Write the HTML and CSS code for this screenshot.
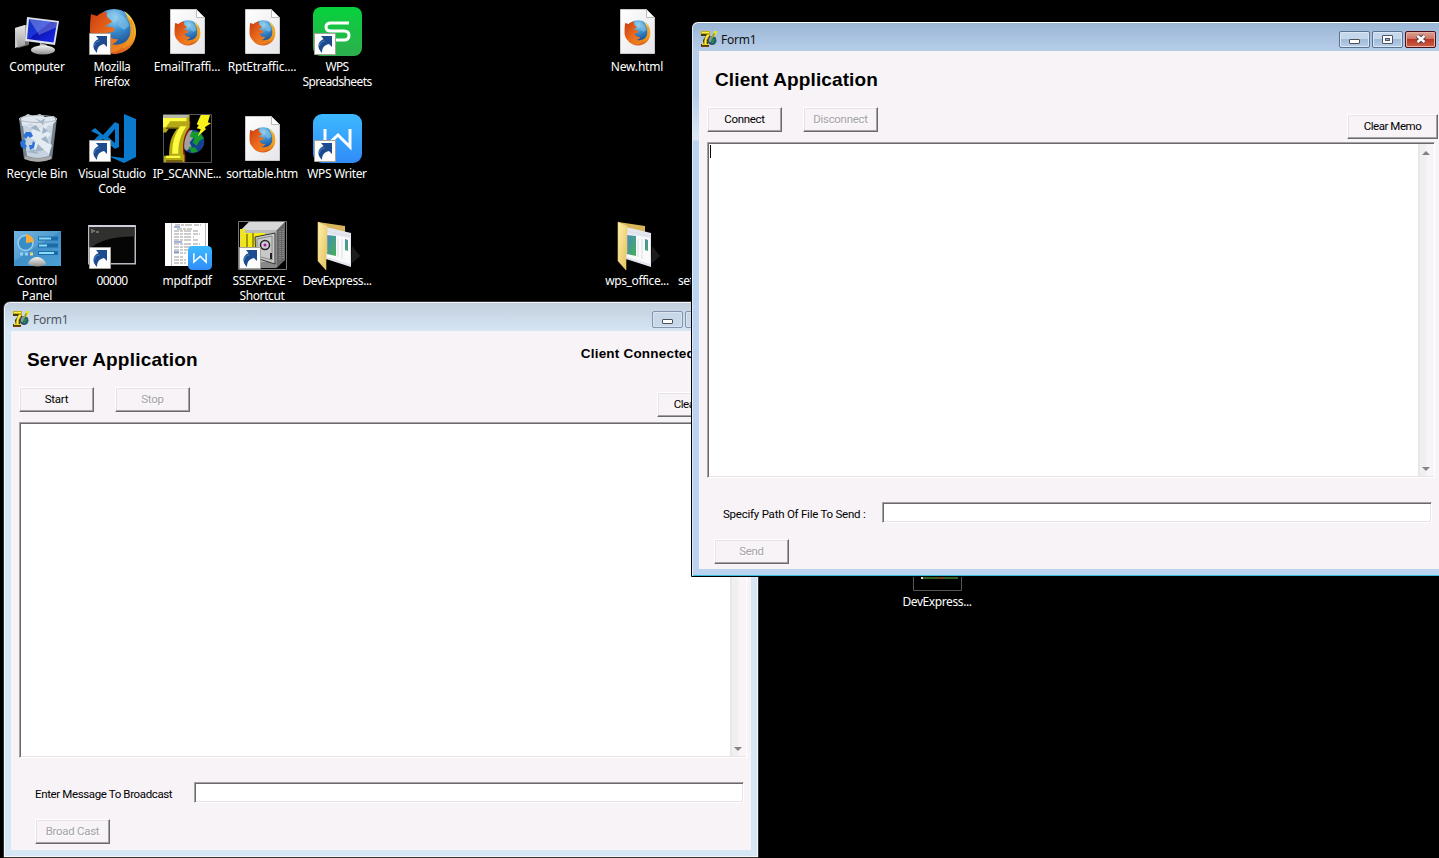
FILE: index.html
```html
<!DOCTYPE html>
<html lang="en">
<head>
<meta charset="utf-8">
<title>Form1</title>
<link rel="stylesheet" href="styles.css">
</head>
<body>
<svg class="defs" width="0" height="0" aria-hidden="true">
  <defs>
    <radialGradient id="globe" cx=".5" cy=".2" r=".8"><stop offset="0" stop-color="#a5dcf4"/><stop offset=".4" stop-color="#3a8fd0"/><stop offset="1" stop-color="#123a80"/></radialGradient>
    <linearGradient id="fox" x1="0" y1="0" x2="1" y2="1"><stop offset="0" stop-color="#c93c10"/><stop offset=".5" stop-color="#ea681c"/><stop offset="1" stop-color="#f08a20"/></linearGradient>
    <linearGradient id="tail" x1="0" y1="0" x2="0" y2="1"><stop offset="0" stop-color="#f6dc56"/><stop offset=".6" stop-color="#f5a81d"/><stop offset="1" stop-color="#d9581a"/></linearGradient>
    <linearGradient id="screen" x1="0" y1="0" x2="1" y2="1"><stop offset="0" stop-color="#1030b8"/><stop offset=".45" stop-color="#1c35dc"/><stop offset=".46" stop-color="#0a14b0"/><stop offset="1" stop-color="#1a2cf0"/></linearGradient>
    <linearGradient id="metal" x1="0" y1="0" x2="0" y2="1"><stop offset="0" stop-color="#f4f4f4"/><stop offset="1" stop-color="#8d8d8d"/></linearGradient>
    <linearGradient id="green" x1="0" y1="0" x2="0" y2="1"><stop offset="0" stop-color="#06d23c"/><stop offset="1" stop-color="#2eae4e"/></linearGradient>
    <linearGradient id="azure" x1="0" y1="0" x2="0" y2="1"><stop offset="0" stop-color="#3cb9ff"/><stop offset="1" stop-color="#318cf8"/></linearGradient>
    <linearGradient id="folder" x1="0" y1="0" x2="1" y2="1"><stop offset="0" stop-color="#fff2ac"/><stop offset="1" stop-color="#e5bf5c"/></linearGradient>
    <linearGradient id="page" x1="0" y1="0" x2="1" y2="1"><stop offset="0" stop-color="#fff"/><stop offset="1" stop-color="#e6e6ea"/></linearGradient>
    <linearGradient id="panel" x1="0" y1="0" x2="1" y2="1"><stop offset="0" stop-color="#62aede"/><stop offset=".5" stop-color="#3f90c8"/><stop offset="1" stop-color="#4da0d6"/></linearGradient>
    <linearGradient id="sheet" x1="0" y1="0" x2="1" y2="1"><stop offset="0" stop-color="#478ac2"/><stop offset="1" stop-color="#45b052"/></linearGradient>

    <symbol id="i-link" viewBox="0 0 22 22">
      <path d="M.5.5h21v21H.5z" fill="#fdfdfd" stroke="#a8a29c"/>
      <path d="M8 20C3 15 3 9 9.500 6L7 3h11v11l-3-3c-5 1-7 4-7 9z" fill="#1c4c8f"/>
      <path d="M5.500 13c0-3 2-5 5-5" fill="none" stroke="#4a86c4"/>
    </symbol>
    <symbol id="i-firefox" viewBox="0 0 48 48">
      <circle cx="25" cy="23" r="21" fill="url(#globe)"/>
      <path d="M18 8c5-5 11-2 9 0s1 4-3 5-5 4-7 3 4-4 1-8zM30 8c5 0 9 5 10 11l-5 4c-3-3-7-3-5-8z" fill="#7ec1e8" opacity=".65"/>
      <path d="M35 4c8 5 12 13 12 21 0 13-10 22-22 22-7 0-13-3-17-7l9-5c9 5 21 3 24-7 2-8-1-17-6-24z" fill="url(#tail)"/>
      <path d="M2 7l6 2c3-3 6-4 10-4-1 3 0 5 1 6 2 1 3 2 4 4-3 2-5 2-6 5 5-1 8 0 9 3-2 2-4 3-7 2 0 5 5 8 10 7-3 6-8 6-13 4 6 5 12 5 18 1-3 8-11 10-18 7C7 41 1 33 1 25c0-7 0-11 1-18z" fill="url(#fox)"/>
      <path d="M38 10c7 8 7 22-4 31M42 13c5 10 3 19-4 25" fill="none" stroke="#ef9523" stroke-width="1.500"/>
    </symbol>
    <symbol id="i-html" viewBox="0 0 49 49">
      <path d="M7.500 2.500h26l8 8v36h-34z" fill="url(#page)" stroke="#c9c9c9"/>
      <path d="M33.500 2.500v8h8z" fill="#fff" stroke="#bcbcbc"/>
      <use href="#i-firefox" x="11" y="12" width="27" height="27"/>
    </symbol>
    <symbol id="i-delphi" viewBox="0 0 48 48">
      <circle cx="29" cy="27" r="11.500" fill="#16418c"/>
      <path d="M18 25c0-6 6-10 11-9l-2 5 3 2-4 5 2 4-5 4c-3-3-5-6-5-11z" fill="#a0a0a0"/>
      <path d="M29 17l7 1 4 6-4 2-3 5-4-3 2-4-5-2zM25 32l7 1 2 4-6 1z" fill="#159a2c"/>
      <path d="M22 7h5l-1 9c-6 8-6 16-4 25v6H3c2 1 13 0 15 0-2-12-4-19 4-31z" fill="#8a1010"/>
      <path d="M0 1h26v12c-6 8-7 15-6 27h1v7H1v-6h5c0-13 2-19 8-27H6L3 18H0z" fill="#b5a815"/>
      <path d="M0 4h23v3H7L3 13H0zM17 12h6c-6 9-8 16-8 27h-6c0-12 3-20 8-27zM3 41h14v2H3z" fill="#fcfb40"/>
      <path d="M0 1h26l-3 3H0z" fill="#b6b6a8"/><path d="M3 14h12M3 46h16" stroke="#5c5008" stroke-width="1.500"/>
      <path d="M37 1h9l-2 7 3 1-6 4 1 2-8 7 3-7-4-1 2-3-2-1z" fill="#f9f21a"/>
    </symbol>
    <symbol id="i-delphi-small" viewBox="0 0 16 16">
      <path d="M0 1h9v5L7 9v4h1v3H0v-3h2V9l3-4H0z" fill="#4a3a08"/>
      <circle cx="11" cy="9.500" r="4.500" fill="#304c70"/>
      <path d="M8 8l2-3 2 1-2 5H8z" fill="#8d9894"/><path d="M11 7l3 1-1 4-3 1z" fill="#1c8c48"/>
      <path d="M0 0h9v4L6 9v4H2l2-6 2-4H0z" fill="#c6ae12"/>
      <path d="M1 1h7v1H1zM6 4h2L5 9v4H4V8z" fill="#fff34a"/><path d="M1 13h7v1H1z" fill="#eadb30"/><path d="M0 15h8v1H0z" fill="#8a3c10"/>
      <path d="M13 0h3v2l-2 3-3 2 1-4z" fill="#e2e428"/><path d="M12 3l2-1-1 3-2 2z" fill="#918c10"/>
    </symbol>
    <symbol id="i-folder" viewBox="0 0 49 49">
      <path d="M38 43l9-8-8-10z" fill="#1c1c1c"/>
      <path d="M5 1l27 4v9L12 40z" fill="#d9b659"/>
      <path d="M13 6l25 6v34L13 38z" fill="#e4e7ef"/>
      <path d="M14 13l23 4v26L14 36z" fill="#fafafa"/>
      <path d="M14 14l9 1v20l-9-2z" fill="url(#sheet)"/><path d="M32 18l3 1v11l-3-1z" fill="url(#sheet)"/>
      <path d="M13 10l24 5M25 18v18M29 18v20" stroke="#dcdfe8"/>
      <path d="M5 1l9 4v27l-1 1v16L5 40z" fill="url(#folder)" stroke="#e6cd79" stroke-width=".6"/>
    </symbol>
    <symbol id="i-w" viewBox="0 0 49 49">
      <rect width="49" height="49" rx="9" fill="url(#azure)"/>
      <path d="M12 15v18l13-12 12 12V15" fill="none" stroke="#fff" stroke-width="3"/>
    </symbol>
  </defs>
</svg>

<main class="desktop">
  <ul class="icons">
    <li class="c1 r1"><svg class="icon" viewBox="0 0 49 49">
      <path d="M2 21l10-3v20l-10 3z" fill="#c8c8c8"/><path d="M2 21l10-3 4 1v19l-11 3z" fill="url(#metal)" opacity=".7"/>
      <path d="M27 36l7 2 1 6h-9z" fill="#b8b8b8"/><ellipse cx="30" cy="43" rx="12" ry="4.500" fill="url(#metal)"/>
      <path d="M14 10l32 4-4 24-30-4z" fill="#dfe3ee"/><path d="M16 12l28 3.500-3.500 20L14 32z" fill="url(#screen)"/>
      <path d="M16 12l28 3.500-1 5L26 28z" fill="#fff" opacity=".25"/></svg><span>Computer</span></li>
    <li class="c2 r1"><svg class="icon" viewBox="0 0 49 49"><use href="#i-firefox" x="1" y="0" width="48" height="48"/><use href="#i-link" x="1" y="26" width="22" height="22"/></svg><span>Mozilla<br>Firefox</span></li>
    <li class="c3 r1"><svg class="icon"><use href="#i-html"/></svg><span>EmailTraffi...</span></li>
    <li class="c4 r1"><svg class="icon"><use href="#i-html"/></svg><span>RptEtraffic....</span></li>
    <li class="c5 r1"><svg class="icon" viewBox="0 0 49 49"><rect width="49" height="49" rx="8" fill="url(#green)"/>
      <path d="M36 16H18q-5 0-5 4t5 4h13q5 0 5 4.500t-5 4.500H13" fill="none" stroke="#fff" stroke-width="3"/><use href="#i-link" x="1" y="26" width="22" height="22"/></svg><span class="tight">WPS<br>Spreadsheets</span></li>
    <li class="c9 r1"><svg class="icon"><use href="#i-html"/></svg><span>New.html</span></li>

    <li class="c1 r2"><svg class="icon" viewBox="0 0 49 49">
      <path d="M6 4l5 41q14 6 28 0l5-41z" fill="#77818d"/><path d="M9 5l5 37q11 4 22 0l5-37z" fill="#c5d2df"/>
      <path d="M8 4l7-4 5 2 7-2 5 3 9-1 2 5-5 5-6-2-7 4-7-4-9 2z" fill="#dfe6ed"/>
      <path d="M12 11l8 4-5 8 8 4-5 10 11-3 7 6 3-9-7-4 6-7-6-4 5-8-11 6z" fill="#e3ebf3"/>
      <path d="M17 14l6-3 5 7zM28 25l5-3 3 8zM14 38l7-3 5 5zM30 13l5 4-6 3zM25 30l-3 8 9-2zM22 4l6 3 4-3-2 7z" fill="#9fb3c6"/>
      <path d="M10 22l3-4h5l2 4-3 2-2-2-2 3zM7 28l4-3 2 2-1 3 2 2-2 3-4-2zM16 31h3l1-4 2 2-1 5-4 2z" fill="#2c72d8"/>
      <ellipse cx="25" cy="5" rx="19" ry="3.500" fill="none" stroke="#b0bac4"/><path d="M12 42q13 5 26 0v3q-13 5-26 0z" fill="#aaa"/></svg><span>Recycle Bin</span></li>
    <li class="c2 r2"><svg class="icon" viewBox="0 0 49 49"><path d="M36 0l12 5v38l-12 6-16-7 16 2zM3 17l4-3 8 7L27 8l4 2v23l-4 2-12-10-7 5-4-2 7-7zM20 23l7 6V15z" fill="#0a7acc" fill-rule="evenodd"/><use href="#i-link" x="1" y="26" width="22" height="22"/></svg><span>Visual Studio<br>Code</span></li>
    <li class="c3 r2"><svg class="icon" viewBox="0 0 49 49"><path d="M.5.5h48v48H.5z" stroke="#555"/><use href="#i-delphi" x="0" y="0" width="49" height="49"/></svg><span>IP_SCANNE...</span></li>
    <li class="c4 r2"><svg class="icon"><use href="#i-html"/></svg><span>sorttable.htm</span></li>
    <li class="c5 r2"><svg class="icon" viewBox="0 0 49 49"><use href="#i-w" width="49" height="49"/><use href="#i-link" x="1" y="26" width="22" height="22"/></svg><span>WPS Writer</span></li>

    <li class="c1 r3"><svg class="icon" viewBox="0 0 49 49"><rect x="1" y="10" width="47" height="35" fill="url(#panel)"/>
      <path d="M1 10h47L1 40z" fill="#fff" opacity=".1"/><circle cx="12.500" cy="22" r="7.500" fill="#398dc7" stroke="#99d0ee" stroke-width="1.500"/><path d="M13 22v-9q7 1 8 8z" fill="#f7ac3c"/>
      <path d="M25 17.500h20M25 24.500h20M25 32h20" stroke="#1c6aa6" stroke-width="4"/><path d="M26 17.500h12M26 24.500h8M26 32h15" stroke="#8bdcfc" stroke-width="2"/>
      <path d="M7 33h3M12 33h3" stroke="#8ed3f4" stroke-width="3"/><path d="M17 33h3" stroke="#f5d080" stroke-width="3"/>
      <path d="M15 43c1-4 5-7 9-7s8 3 9 7q-8 5-18 0z" fill="url(#metal)"/></svg><span>Control<br>Panel</span></li>
    <li class="c2 r3"><svg class="icon" viewBox="0 0 49 49"><path d="M.75 4.750h46.500v38H.75z" fill="#050505" stroke="#b9b9c2" stroke-width="1.500"/><path d="M1.500 5.500h45v10C25 15 10 20 1.500 28z" fill="#30302f"/><path d="M1 5h46" stroke="#d0d0dc" stroke-width="2"/><path d="M3 9h2M3 11h2M6 9v2M8 11h3" stroke="#aaa"/><use href="#i-link" x="1" y="26" width="22" height="22"/></svg><span>00000</span></li>
    <li class="c3 r3"><svg class="icon" viewBox="0 0 49 49"><path d="M2 2h43v43H2z" fill="#fff"/><path d="M8.500 2v43M42.500 2v43" stroke="#bbb"/>
      <path d="M12 4h26M14 8h15M11 10h24M11 13h26M11 16h20M11 19h25M11 23h26M11 26h22M11 29h25M11 32h12M11 36h10M11 39h12M11 42h12" stroke="#999" stroke-dasharray="5 1 3 1 7 2"/><path d="M11 6h6M11 21h8M11 31h5" stroke="#426bb4"/>
      <use href="#i-w" x="25" y="25" width="24" height="24"/></svg><span>mpdf.pdf</span></li>
    <li class="c4 r3"><svg class="icon" viewBox="0 0 49 49"><path d="M.5.500h48v48H.5z" stroke="#777"/><path d="M3 9l8-8h36v38l-9 8H20L3 32z" fill="#888"/><path d="M3 9l8-8h36l-8 8z" fill="#d8d8d8"/><path d="M39 9l8-8v37l-8 9z" fill="#666"/><path d="M3 9h35v32H3z" fill="#bababa"/>
      <path d="M6 12h21v18H6z" fill="#f4eb12"/><path d="M2 8h5v20H2z" fill="#eee22a"/><path d="M9 13v17M15 12v18" stroke="#867c00" stroke-width="1.500"/><path d="M17 16l20-4v31l-19-6z" fill="#c9c9c9" stroke="#333"/><path d="M19 18l15-3v24l-15-4z" fill="none" stroke="#888"/>
      <circle cx="27" cy="24" r="4.500" fill="#ccc" stroke="#222" stroke-width="1.500"/><circle cx="27" cy="24" r="1.500" fill="#b20cb6"/><path d="M42 10v30M45 8v29" stroke="#aaa" stroke-dasharray="1 1"/><path d="M33 38v-6" stroke="#222" stroke-width="2"/><use href="#i-link" x="1" y="26" width="22" height="22"/></svg><span>SSEXP.EXE -<br>Shortcut</span></li>
    <li class="c5 r3"><svg class="icon"><use href="#i-folder"/></svg><span>DevExpress...</span></li>
    <li class="c9 r3"><svg class="icon"><use href="#i-folder"/></svg><span>wps_office...</span></li>
    <li class="c10 r3"><svg class="icon"></svg><span>setup_8.2.0...</span></li>
    <li class="c13 r6"><svg class="icon" viewBox="0 0 49 49"><path d="M.5.500h48v48H.5z" stroke="#555"/><path d="M8 34h37v3H8z" fill="#315f20"/><path d="M26 34h4v3h-4z" fill="#8a2a10"/><path d="M8 35h2v2H8z" fill="#ddd"/></svg><span>DevExpress...</span></li>
  </ul>

  <section class="window server">
    <header class="titlebar"><svg class="appicon"><use href="#i-delphi-small"/></svg><h1>Form1</h1>
      <div class="controls"><button class="ctl"><i class="min"></i></button><button class="ctl"><i class="max"></i></button><button class="ctl close"></button></div></header>
    <div class="form">
      <div class="top"><h2>Server Application</h2><strong class="status">Client Connected</strong></div>
      <div class="actions"><button class="btn">Start</button><button class="btn" disabled>Stop</button><button class="btn clear">Clear Memo</button></div>
      <div class="memo"><div class="text"></div><div class="scroll"><i class="up"></i><i class="down"></i></div></div>
      <div class="field"><label class="enter">Enter Message To Broadcast</label><div class="input"></div></div>
      <div class="send"><button class="btn" disabled>Broad Cast</button></div>
    </div>
  </section>

  <section class="window client">
    <header class="titlebar"><svg class="appicon"><use href="#i-delphi-small"/></svg><h1>Form1</h1>
      <div class="controls"><button class="ctl"><i class="min"></i></button><button class="ctl"><i class="max"></i></button><button class="ctl close"><svg width="12" height="10" viewBox="0 0 12 10"><path d="M2.500 2l7 6M9.500 2l-7 6" stroke="#554349" stroke-width="4.500"/><path d="M2.500 2l7 6M9.500 2l-7 6" stroke="#fff" stroke-width="2.400"/></svg></button></div></header>
    <div class="form">
      <div class="top"><h2>Client Application</h2></div>
      <div class="actions"><button class="btn">Connect</button><button class="btn" disabled>Disconnect</button><button class="btn clear">Clear Memo</button></div>
      <div class="memo"><div class="text"><i class="caret"></i></div><div class="scroll"><i class="up"></i><i class="down"></i></div></div>
      <div class="field"><label>Specify Path Of File To Send :</label><div class="input"></div></div>
      <div class="send"><button class="btn" disabled>Send</button></div>
    </div>
  </section>
</main>
</body>
</html>
```

FILE: styles.css
```css
* { box-sizing: border-box; }
body { margin: 0; background: #000; overflow: hidden; }
.defs { position: absolute; }
.desktop { position: relative; width: 1439px; height: 858px; overflow: hidden; background: #000; }

/* Desktop icon grid */
.icons { margin: 0; padding: 0; list-style: none; display: grid; grid-template-columns: repeat(19, 75px); grid-template-rows: repeat(8, 107px); }
.icons li { display: flex; flex-direction: column; align-items: center; padding-top: 7px; color: #fff; font: 12px/15px "Noto Sans", sans-serif; text-align: center; white-space: nowrap; letter-spacing: -.4px; }
.icons span { margin-right: 1px; }
.icons .tight { letter-spacing: -.6px; }
.icon { width: 49px; height: 49px; margin-bottom: 3px; flex: none; }
.c1 { grid-column: 1; } .c2 { grid-column: 2; } .c3 { grid-column: 3; } .c4 { grid-column: 4; }
.c5 { grid-column: 5; } .c9 { grid-column: 9; } .c10 { grid-column: 10; } .c13 { grid-column: 13; }
.r1 { grid-row: 1; } .r2 { grid-row: 2; } .r3 { grid-row: 3; } .r6 { grid-row: 6; }
.icons .c1, .icons .c9.r1, .icons .c3.r1, .icons .c4.r1 { letter-spacing: -.2px; }
.icons .c2.r3 { letter-spacing: -.7px; }

/* Windows */
.window { position: absolute; width: 756px; height: 557px; padding: 0 7px 7px; display: flex; flex-direction: column; border: 1px solid #333; border-radius: 7px 7px 0 0; }
.server { left: 3px; top: 301px; background: linear-gradient(#c2cedc, #d6e6f5 29px, #d6e6f5); box-shadow: inset 0 0 0 1px #f3f7fb; }
.client { left: 691px; top: 21px; height: 556px; border-color: #000; background: linear-gradient(#98b4d4, #b7cee9 29px, #b5cdea 70px, #dce8f6 118px, #bcd3ef 119px); box-shadow: inset 0 1px #fff, inset 1px 0 #dfeafa, inset 0 -1px #38bddc; }
.titlebar { height: 29px; flex: none; display: flex; align-items: center; padding: 5px 2px 0 2px; }
.client .titlebar { padding-right: 3px; }
.appicon { width: 16px; height: 16px; }
.titlebar h1 { margin: 1px 0 0 4px; font: 12px/16px "Noto Sans", sans-serif; letter-spacing: -.2px; color: #111; }
.server h1 { color: #4c555f; }
.controls { margin-left: auto; display: flex; gap: 2px; }
.ctl { width: 31px; height: 17px; padding: 0; display: flex; align-items: center; justify-content: center; border: 1px solid #5a718f; border-radius: 2px; background: linear-gradient(#c5d7eb 46%, #a0bad7 50%, #b7cee8); box-shadow: inset 0 0 0 1px #d9e7f6; }
.server .ctl { border-color: #8493ae; background: #c9d8e9; box-shadow: inset 0 0 0 1px #d9e4f1; }
.client .close { border-color: #4b1018; background: linear-gradient(#dda297, #cd7363 46%, #b93722 50%, #cb6049); box-shadow: inset 0 0 0 1px #e7b1a5; }
.min { width: 11px; height: 5px; margin-top: 4px; border: 1px solid #4d4f57; border-radius: 1px; background: #fff; }
.max { width: 11px; height: 9px; border: 1px solid #4d5564; border-radius: 1px; background: #8facd0; box-shadow: inset 0 0 0 2px #fff, inset 0 0 0 3px #4d5564; }

/* Form content */
.form { height: 519px; flex: none; background: #f7f3f7; color: #000; font: 12px/14px Roboto, "Liberation Sans", Arial, sans-serif; }
.client .form { height: 518px; }
.top { height: 56px; display: flex; justify-content: space-between; align-items: flex-start; padding: 18px 56px 0 16px; font-family: "Liberation Sans", Arial, sans-serif; }
.top h2 { margin: 0; font-size: 19px; line-height: 22px; letter-spacing: .12px; }
.server h2 { letter-spacing: .2px; }
.status { font-size: 13.500px; line-height: 16px; margin-top: -3px; letter-spacing: .2px; }
.actions { height: 35px; display: flex; gap: 21px; align-items: flex-start; padding-left: 8px; }
.btn { width: 75px; height: 25px; padding: 0 0 1px; flex: none; color: #000; font: 11.500px/14px Roboto, "Liberation Sans", Arial, sans-serif; letter-spacing: -.3px; background: #f7f3f7; border: 1px solid; border-color: #fff #6b696b #6b696b #fff; box-shadow: inset -1px -1px #a5a2a5, inset 1px 1px #e7e3e7; }
.btn:disabled { color: #a5a2a5; text-shadow: 1px 1px #fff; }
.actions .clear { width: 91px; margin: 5px 3px 0 auto; letter-spacing: -.45px; }
.client .actions .clear { margin: 7px 1px 0 auto; }
.memo { width: 728px; height: 336px; margin-left: 8px; display: flex; background: #fff; border: 1px solid; border-color: #a5a2a5 #fff #fff #a5a2a5; box-shadow: inset 1px 1px #6b696b, inset -1px -1px #e7e3e7; padding: 1px 0 0 2px; }
.text { flex: 1; }
.caret { display: block; width: 1px; height: 13px; margin-top: 1px; background: #000; }
.scroll { width: 16px; margin: 0 0 1px; display: flex; flex-direction: column; justify-content: space-between; align-items: center; padding: 7px 0 5px; background: linear-gradient(90deg, #e7e3e7 1px, #efefef 2px, #f1f0f1 8px, #f8f4f8 9px); }
.up, .down { width: 0; border: 4px solid transparent; border-top-width: 0; border-bottom: 4px solid #858285; }
.down { border-top: 4px solid #858285; border-bottom-width: 0; }
.field { display: flex; align-items: center; height: 21px; margin: 24px 7px 0 24px; }
.field label { width: 159px; white-space: nowrap; padding-top: 3px; font-size: 11.500px; letter-spacing: -.23px; }
.field .enter { letter-spacing: -.37px; }
.input { flex: 1; height: 21px; background: #fff; border: 1px solid; border-color: #a5a2a5 #fff #fff #a5a2a5; box-shadow: inset 1px 1px #6b696b, inset -1px -1px #e7e3e7; }
.send { padding: 16px 0 0 24px; }
.client .send { padding-left: 15px; }
```
